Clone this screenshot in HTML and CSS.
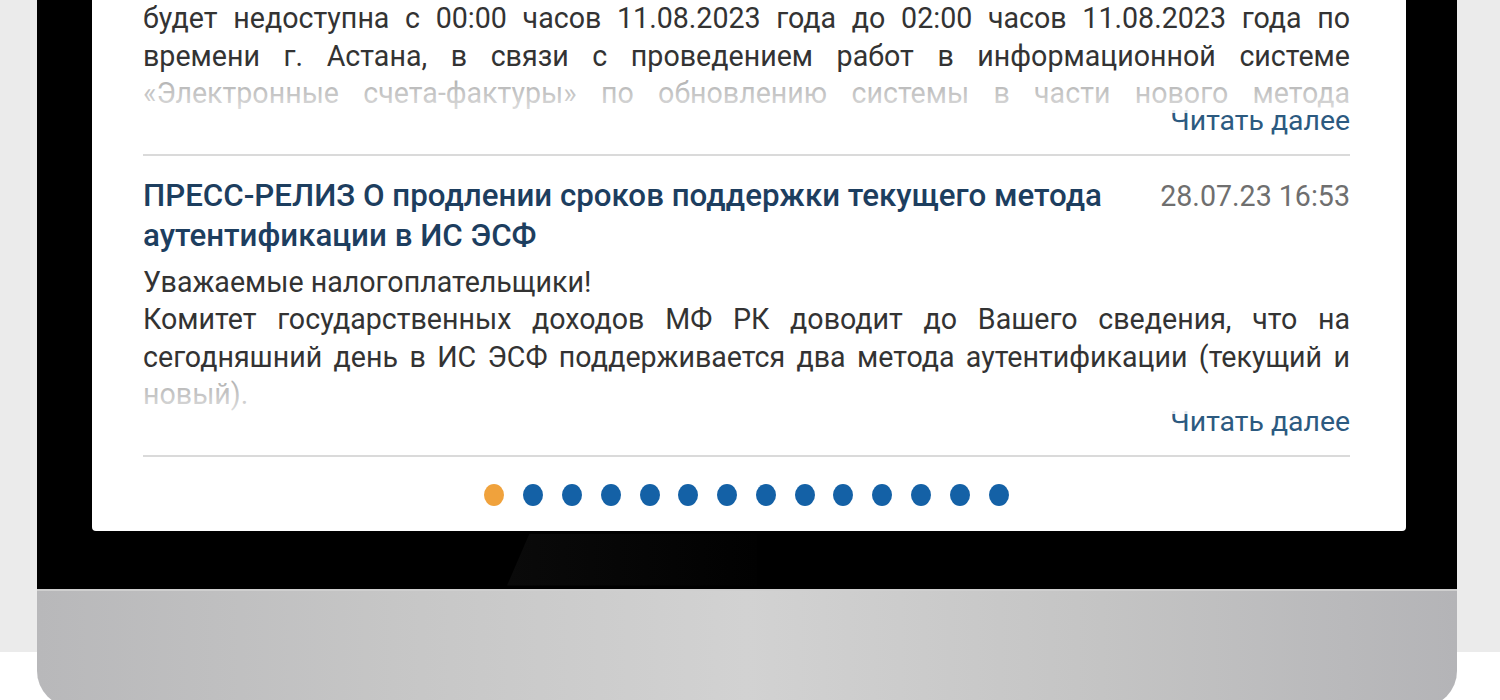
FILE: index.html
```html
<!DOCTYPE html>
<html lang="ru">
<head>
  <meta charset="UTF-8" />
  <meta name="viewport" content="width=device-width, initial-scale=1.0" />
  <title>Новости ИС ЭСФ</title>
  <link rel="stylesheet" href="styles.css">
</head>
<body>
  <div class="desk">
    <div class="monitor">
      <div class="bezel">
        <div class="screen">
          <ul class="news">
            <li class="news-item">
              <div class="news-text news-text--cut">
                будет недоступна с 00:00 часов 11.08.2023 года до 02:00 часов 11.08.2023 года по
                времени г. Астана, в связи с проведением работ в информационной системе
                «Электронные счета-фактуры» по обновлению системы в части нового метода
              </div>
              <a class="more" href="#">Читать далее</a>
            </li>
            <li class="news-item">
              <div class="news-head">
                <a class="news-title" href="#">ПРЕСС-РЕЛИЗ О продлении сроков поддержки текущего метода аутентификации в ИС ЭСФ</a>
                <span class="news-date">28.07.23 16:53</span>
              </div>
              <div class="news-text">
                Уважаемые налогоплательщики!<br>
                Комитет государственных доходов МФ РК доводит до Вашего сведения, что на
                сегодняшний день в ИС ЭСФ поддерживается два метода аутентификации (текущий и
                новый).
              </div>
              <a class="more" href="#">Читать далее</a>
            </li>
          </ul>
          <div class="dots">
            <span class="dot active"></span>
            <span class="dot"></span>
            <span class="dot"></span>
            <span class="dot"></span>
            <span class="dot"></span>
            <span class="dot"></span>
            <span class="dot"></span>
            <span class="dot"></span>
            <span class="dot"></span>
            <span class="dot"></span>
            <span class="dot"></span>
            <span class="dot"></span>
            <span class="dot"></span>
            <span class="dot"></span>
          </div>
        </div>
      </div>
      <div class="chin"></div>
    </div>
  </div>
</body>
</html>
```

FILE: styles.css
```css
html, body {
  height: 100%;
}
body {
  margin: 0;
  overflow: hidden;
  font-family: Roboto, "Liberation Sans", sans-serif;
  background: linear-gradient(#ebebeb 652px, #fff 652px);
}
.desk {
  padding: 0 43px 0 37px;
}
.monitor {
  width: 1420px;
}
.bezel {
  position: relative;
  background: #000;
  padding: 0 51px 58px 55px;
}
/* faint glare on the lower frame */
.bezel::after {
  content: "";
  position: absolute;
  left: 470px;
  bottom: 3px;
  width: 250px;
  height: 52px;
  background: linear-gradient(90deg, rgba(40, 40, 40, 0.25), rgba(20, 20, 20, 0.05));
  clip-path: polygon(9% 0, 100% 0, 100% 100%, 0 100%);
}
.screen {
  background: #fff;
  border-radius: 0 0 4px 4px;
  padding: 0 56px 25px 51px;
}
.news {
  list-style: none;
  margin: 0;
  padding: 0;
}
.news-item {
  padding: 20px 0 18px;
  border-bottom: 2px solid #dadada;
}
.news-item:first-child {
  padding-top: 0;
}
.news-head {
  display: flex;
  justify-content: space-between;
  gap: 40px;
  margin-bottom: 8px;
}
.news-title {
  font-size: 31.3px;
  font-weight: 500;
  line-height: 40px;
  color: #1d3e5f;
  text-decoration: none;
}
.news-date {
  font-size: 28.6px;
  line-height: 40px;
  color: #6f6f6f;
  white-space: nowrap;
}
.news-text {
  position: relative;
  font-size: 28.6px;
  line-height: 37.5px;
  color: #333;
  text-align: justify;
}
.news-text--cut {
  text-align-last: justify;
}
/* last line of an excerpt fades out */
.news-text::after {
  content: "";
  position: absolute;
  left: 0;
  right: 0;
  bottom: 0;
  height: 37px;
  background: linear-gradient(rgba(255, 255, 255, 0.6), rgba(255, 255, 255, 0.85));
}
.more {
  display: block;
  margin-top: -7px;
  text-align: right;
  font-size: 28.4px;
  line-height: 30px;
  color: #2c5a80;
  text-decoration: none;
}
.dots {
  display: flex;
  justify-content: center;
  gap: 18.8px;
  margin-top: 27px;
}
.dot {
  width: 20px;
  height: 22px;
  border-radius: 50%;
  background: #1461a6;
}
.dot.active {
  background: #f0a23c;
}
.chin {
  height: 118px;
  border-radius: 0 0 36px 36px;
  background: linear-gradient(90deg, #b8b8ba 0%, #c6c6c6 25%, #d2d2d2 50%, #c4c4c4 75%, #b4b4b7 100%);
  box-shadow: inset 0 2px 0 #cfcfcf;
}
```
